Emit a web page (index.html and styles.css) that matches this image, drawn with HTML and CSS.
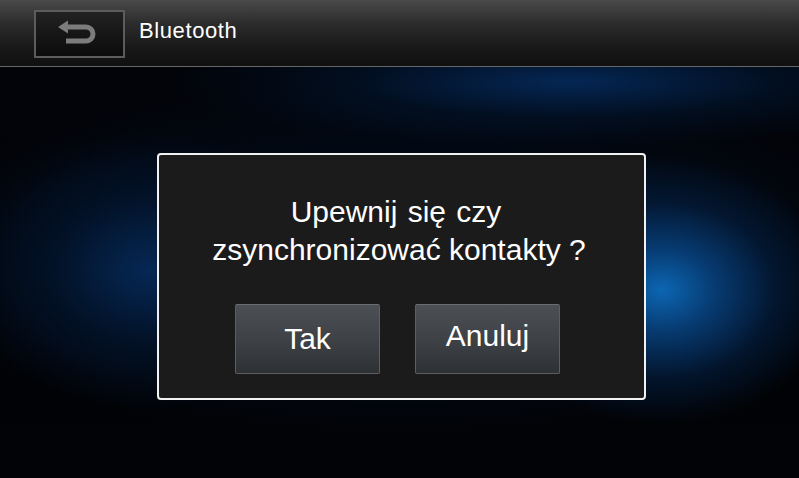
FILE: index.html
```html
<!DOCTYPE html>
<html lang="pl">
<head>
<meta charset="utf-8">
<title>Bluetooth</title>
<link rel="stylesheet" href="styles.css">
</head>
<body>
<div class="screen">
  <header class="topbar">
    <button class="back" aria-label="Wstecz">
      <svg width="91" height="48" viewBox="0 0 91 48">
        <path d="M33 17 H52 A7 7 0 0 1 52 31 H32" fill="none" stroke="#7c7c7c" stroke-width="5"/>
        <polygon points="24,17 34,10.5 34,23.5" fill="#7c7c7c"/>
      </svg>
    </button>
    <span class="title">Bluetooth</span>
  </header>
  <main class="stage">
    <div class="dialog">
      <p class="msg"><span class="line1">Upewnij się czy</span><br>zsynchronizować kontakty ?</p>
      <div class="actions">
        <button class="btn btn-low">Tak</button>
        <button class="btn">Anuluj</button>
      </div>
    </div>
  </main>
</div>
</body>
</html>
```
FILE: styles.css
```css
html, body {
  margin: 0;
  padding: 0;
  background: #000;
}
.screen {
  width: 799px;
  height: 478px;
  overflow: hidden;
  display: flex;
  flex-direction: column;
  font-family: "Liberation Sans", Arial, sans-serif;
  color: #fff;
  background:
    radial-gradient(ellipse 175px 135px at 662px 290px, rgba(12, 102, 178, 1) 0%, rgba(8, 72, 138, 0.8) 30%, rgba(4, 40, 85, 0.45) 65%, rgba(0, 0, 0, 0) 100%),
    radial-gradient(ellipse 190px 140px at 150px 270px, rgba(6, 45, 95, 0.85) 0%, rgba(3, 28, 62, 0.5) 50%, rgba(0, 0, 0, 0) 100%),
    radial-gradient(ellipse 400px 65px at 570px 82px, rgba(5, 45, 98, 0.85) 0%, rgba(2, 25, 55, 0.45) 55%, rgba(0, 0, 0, 0) 100%),
    radial-gradient(ellipse 520px 180px at 400px 260px, rgba(3, 22, 48, 0.75) 0%, rgba(0, 0, 0, 0) 100%),
    linear-gradient(#02040a, #010205 80%, #020306);
}
.topbar {
  height: 66px;
  flex: none;
  display: flex;
  align-items: flex-start;
  border-bottom: 1px solid #666;
  background: linear-gradient(#4a4a4a 0%, #2c2c2c 35%, #171717 75%, #101010 100%);
  box-sizing: content-box;
}
.back {
  margin: 10px 0 0 34px;
  width: 91px;
  height: 48px;
  padding: 0;
  box-sizing: border-box;
  border: 2px solid #5c5c5c;
  background: linear-gradient(#222 0%, #161616 50%, #0c0c0c 100%);
  display: flex;
  align-items: center;
  justify-content: center;
}
.back svg {
  display: block;
  margin: -2px;
  flex: none;
}
.title {
  margin: 17px 0 0 14px;
  font-size: 22px;
  line-height: 28px;
  letter-spacing: 0.6px;
  color: #fff;
}
.stage {
  flex: 1;
  display: flex;
  align-items: flex-start;
  padding: 86px 0 0 157px;
}
.dialog {
  width: 489px;
  height: 247px;
  box-sizing: border-box;
  border: 2px solid #f2f2f2;
  border-radius: 4px;
  background: #1b1b1b;
  padding-top: 38px;
}
.msg {
  margin: 0 5px 0 0;
  text-align: center;
  font-size: 30px;
  line-height: 38px;
  color: #fff;
}
.line1 {
  word-spacing: 2px;
  margin-right: 6px;
}
.actions {
  display: flex;
  gap: 35px;
  padding: 35px 0 0 76px;
}
.btn {
  width: 145px;
  height: 70px;
  box-sizing: border-box;
  border: 1px solid #5b5e62;
  border-top-color: #6a6d71;
  border-radius: 2px;
  background: linear-gradient(#4c4f53 0%, #3e4145 50%, #2e3134 100%);
  color: #fff;
  font-family: "Liberation Sans", Arial, sans-serif;
  font-size: 30px;
  line-height: 34px;
  padding: 0 0 6px;
  display: flex;
  align-items: center;
  justify-content: center;
}
.btn-low {
  padding: 0;
}
```
